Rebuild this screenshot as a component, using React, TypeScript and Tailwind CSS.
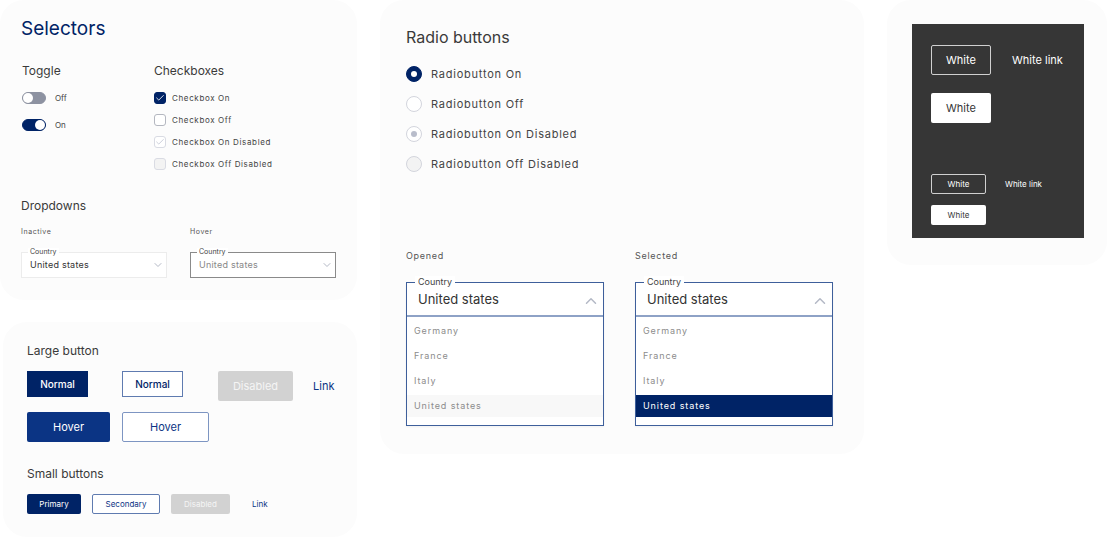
import type { ReactNode } from "react";
import { Check, ChevronDown, ChevronUp } from "lucide-react";
import clsx from "clsx";

const COUNTRIES = ["Germany", "France", "Italy", "United states"];

function Card({ className, children }: { className?: string; children: ReactNode }) {
  return <section className={clsx("rounded-3xl bg-[#fcfcfc]", className)}>{children}</section>;
}

function SectionTitle({ children }: { children: ReactNode }) {
  return <h2 className="text-[12px] leading-4 text-[#3a3a3a]">{children}</h2>;
}

function Toggle({ label, on }: { label: string; on?: boolean }) {
  return (
    <label className="flex h-3 items-center gap-[9px] text-[8px] leading-3 text-[#444]">
      <input
        type="checkbox"
        role="switch"
        defaultChecked={on}
        className="flex h-3 w-6 appearance-none rounded-full border border-[#8d92a1] bg-[#8d92a1] before:size-[10px] before:rounded-full before:bg-white checked:justify-end checked:border-[#002366] checked:bg-[#002366]"
      />
      {label}
    </label>
  );
}

function Checkbox({ label, checked, disabled }: { label: string; checked?: boolean; disabled?: boolean }) {
  return (
    <label className="flex h-3 items-center gap-[6px] text-[8px] leading-3 tracking-[0.08em] text-[#444]">
      <span className="relative size-3">
        <input
          type="checkbox"
          defaultChecked={checked}
          disabled={disabled}
          className={clsx(
            "block size-3 appearance-none rounded-[3px] border",
            !disabled && "border-[#b4b7c0] bg-white checked:border-[#002366] checked:bg-[#002366]",
            disabled && "border-[#d9dbe3] bg-[#f3f3f3] checked:bg-white"
          )}
        />
        {checked && (
          <Check
            className={clsx(
              "pointer-events-none absolute inset-0 m-auto size-[10px]",
              disabled ? "text-[#c3c6d2]" : "text-white"
            )}
            strokeWidth={2}
            aria-hidden="true"
          />
        )}
      </span>
      {label}
    </label>
  );
}

function Radio({ label, name, checked, disabled }: { label: string; name: string; checked?: boolean; disabled?: boolean }) {
  return (
    <label className="flex h-4 items-center gap-[9px] text-[11px] leading-4 tracking-[0.07em] text-[#444]">
      <input
        type="radio"
        name={name}
        defaultChecked={checked}
        disabled={disabled}
        className={clsx(
          "flex size-4 appearance-none items-center justify-center rounded-full border before:size-[6px] before:rounded-full",
          !disabled && "border-[#d3d5dd] bg-white checked:border-[#002366] checked:bg-[#002366] checked:before:bg-white",
          disabled && "border-[#d3d5dd] bg-[#f3f3f3] checked:bg-white checked:before:bg-[#b9bdcb]"
        )}
      />
      {label}
    </label>
  );
}

function Dropdown({ id, caption, hover }: { id: string; caption: string; hover?: boolean }) {
  return (
    <div>
      <p className="text-[7px] leading-3 tracking-[0.08em] text-[#555]">{caption}</p>
      <div className="relative mt-[14px]">
        <label htmlFor={id} className="absolute -top-1 left-[7px] bg-white px-[2px] text-[7px] leading-2 text-[#444]">
          Country
        </label>
        <select
          id={id}
          defaultValue="United states"
          className={clsx(
            "block h-[26px] w-full appearance-none border bg-white pr-5 pl-2 text-[9px] tracking-wide",
            hover ? "border-[#8a8a8a] text-[#888]" : "border-[#ececec] text-[#333]"
          )}
        >
          {COUNTRIES.map((c) => (
            <option key={c}>{c}</option>
          ))}
        </select>
        <ChevronDown
          className="pointer-events-none absolute top-[7px] right-[3px] size-3 text-[#b4b9c6]"
          aria-hidden="true"
        />
      </div>
    </div>
  );
}

function OpenDropdown({ id, caption, selected }: { id: string; caption: string; selected?: boolean }) {
  return (
    <div>
      <p className="text-[9px] leading-3 tracking-[0.08em] text-[#555]">{caption}</p>
      <div className="relative mt-5 border border-[#3e5f9b] bg-white shadow-xs">
        <label htmlFor={id} className="absolute -top-[7px] left-2 bg-white px-[3px] text-[9px] leading-3 text-[#444]">
          Country
        </label>
        <select
          id={id}
          defaultValue="United states"
          className="block h-[34px] w-full appearance-none border-b-2 border-[#8ea2c6] bg-white pt-[2px] pr-8 pl-[11px] text-[13px] text-[#333]"
        >
          {COUNTRIES.map((c) => (
            <option key={c}>{c}</option>
          ))}
        </select>
        <ChevronUp
          className="pointer-events-none absolute top-[9px] right-[3px] size-[18px] text-[#b4b9c6]"
          strokeWidth={2}
          aria-hidden="true"
        />
        <ul role="listbox" aria-label="Country" className="flex flex-col gap-[3px] pt-[3px] pb-2">
          {COUNTRIES.map((c) => {
            const active = c === "United states";
            return (
              <li
                key={c}
                role="option"
                aria-selected={active}
                className={clsx(
                  "px-[7px] text-[9px] leading-[22px] tracking-widest",
                  active && selected ? "bg-[#002366] text-white" : "text-[#8c8c8c]",
                  active && !selected && "bg-[#f8f8f8]"
                )}
              >
                {c}
              </li>
            );
          })}
        </ul>
      </div>
    </div>
  );
}

function App() {
  return (
    <main className="grid grid-cols-[357fr_484fr_220fr] items-start gap-x-[23px] bg-white pr-[2px] font-['Inter',sans-serif]">
      <div className="flex flex-col gap-[22px]">
        <Card className="px-[21px] pt-[17px] pb-[22px]">
          <h1 className="text-[19px] leading-6 text-[#002366]">Selectors</h1>

          <div className="mt-[22px] grid grid-cols-[132px_1fr] pl-px">
            <div>
              <SectionTitle>Toggle</SectionTitle>
              <div className="mt-[13px] flex flex-col gap-[15px]">
                <Toggle label="Off" />
                <Toggle label="On" on />
              </div>
            </div>
            <div>
              <SectionTitle>Checkboxes</SectionTitle>
              <div className="mt-[13px] flex flex-col gap-[10px]">
                <Checkbox label="Checkbox On" checked />
                <Checkbox label="Checkbox Off" />
                <Checkbox label="Checkbox On Disabled" checked disabled />
                <Checkbox label="Checkbox Off Disabled" disabled />
              </div>
            </div>
          </div>

          <div className="mt-7">
            <SectionTitle>Dropdowns</SectionTitle>
            <div className="mt-3 grid grid-cols-2 gap-[23px]">
              <Dropdown id="country-inactive" caption="Inactive" />
              <Dropdown id="country-hover" caption="Hover" hover />
            </div>
          </div>
        </Card>

        <Card className="ml-[3px] pt-[21px] pr-5 pb-[23px] pl-6">
          <SectionTitle>Large button</SectionTitle>
          <div className="mt-3 grid grid-cols-[95px_96px_95px_auto] items-start justify-start gap-y-[11px] text-[11px]">
            <div>
              <button className="h-[26px] w-[61px] bg-[#002366] text-[10px] font-medium text-white">Normal</button>
            </div>
            <div>
              <button className="h-[26px] w-[61px] border border-[#5f7bb0] bg-white text-[10px] font-medium text-[#002366]">
                Normal
              </button>
            </div>
            <div>
              <button disabled className="h-[30px] w-[75px] rounded-xs bg-[#d2d2d2] text-[#f5f5f5]">
                Disabled
              </button>
            </div>
            <a href="#" className="leading-[30px] text-[#0b3484]">
              Link
            </a>
            <div>
              <button className="h-[30px] w-[83px] rounded-xs bg-[#0b3484] text-white">Hover</button>
            </div>
            <div>
              <button className="h-[30px] w-[87px] rounded-xs border border-[#7d95c2] bg-white text-[#0b3484]">
                Hover
              </button>
            </div>
          </div>

          <div className="mt-6">
            <SectionTitle>Small buttons</SectionTitle>
            <div className="mt-3 flex items-center gap-[11px] text-[8px]">
              <button className="h-5 w-[54px] rounded-xs bg-[#002366] text-white">Primary</button>
              <button className="h-5 w-[68px] rounded-xs border border-[#5f7bb0] bg-white text-[#0b3484]">
                Secondary
              </button>
              <button disabled className="h-5 w-[59px] rounded-xs bg-[#d2d2d2] text-[#f5f5f5]">
                Disabled
              </button>
              <a href="#" className="pl-[11px] text-[#0b3484]">
                Link
              </a>
            </div>
          </div>
        </Card>
      </div>

      <Card className="pt-[25px] pr-[31px] pb-7 pl-[26px]">
        <h2 className="text-[16px] leading-6 text-[#3a3a3a]">Radio buttons</h2>
        <div className="mt-[17px] flex flex-col gap-[14px]">
          <Radio name="radio" label="Radiobutton On" checked />
          <Radio name="radio" label="Radiobutton Off" />
          <Radio name="radio-disabled" label="Radiobutton On Disabled" checked disabled />
          <Radio name="radio-disabled" label="Radiobutton Off Disabled" disabled />
        </div>
        <div className="mt-[78px] grid grid-cols-2 gap-[31px]">
          <OpenDropdown id="country-opened" caption="Opened" />
          <OpenDropdown id="country-selected" caption="Selected" selected />
        </div>
      </Card>

      <Card className="pt-6 pr-[23px] pb-[27px] pl-[25px]">
        <div className="bg-[#363636] px-[19px] pt-[21px] pb-[13px] text-white">
          <div className="flex items-center gap-[21px] text-[11px]">
            <button className="h-[30px] w-[60px] rounded-xs border border-[#d0d0d0]">White</button>
            <a href="#">White link</a>
          </div>
          <button className="mt-[18px] block h-[30px] w-[60px] rounded-xs bg-white text-[11px] text-[#363636]">
            White
          </button>
          <div className="mt-[51px] flex items-center gap-[19px] text-[8px]">
            <button className="h-5 w-[55px] rounded-xs border border-[#d0d0d0]">White</button>
            <a href="#">White link</a>
          </div>
          <button className="mt-[11px] block h-5 w-[55px] rounded-xs bg-white text-[8px] text-[#363636]">White</button>
        </div>
      </Card>
    </main>
  );
}

export default App;
